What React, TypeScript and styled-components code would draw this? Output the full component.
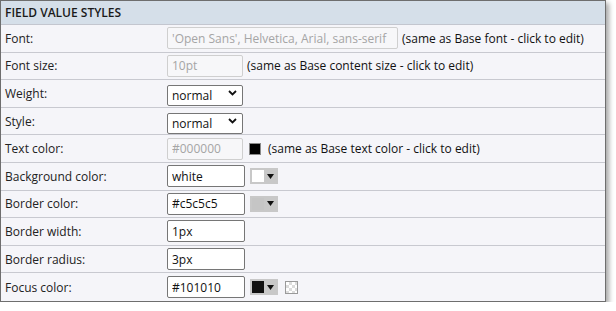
import React from 'react';
import styled, { createGlobalStyle } from 'styled-components';

const GlobalStyle = createGlobalStyle`
  body {
    margin: 0;
    background: #ffffff;
    font-family: 'Open Sans', 'Liberation Sans', sans-serif;
  }
`;

const Panel = styled.div`
  width: 606px;
  box-sizing: border-box;
  border: 1px solid #6e6e6e;
  background: #f5f5f9;
  box-shadow: 3px 3px 5px rgba(0, 0, 0, 0.35);
`;

const Header = styled.div`
  height: 23px;
  display: flex;
  align-items: center;
  padding-left: 4px;
  background: #d5dfe9;
  border-bottom: 1px solid #c3c6cf;
  font-size: 12px;
  font-weight: 600;
  color: #1a1a1a;
`;

const Row = styled.div<{ $last?: boolean }>`
  display: grid;
  grid-template-columns: 166px 1fr;
  align-items: center;
  box-sizing: border-box;
  height: 27.6px;
  border-bottom: ${(p) => (p.$last ? 'none' : '1px solid #c8c9d0')};
`;

const Label = styled.div`
  padding-left: 4px;
  font-size: 12px;
  color: #222;
`;

const Controls = styled.div`
  display: flex;
  align-items: center;
`;

const TextInput = styled.input<{ $width?: number }>`
  box-sizing: border-box;
  width: ${(p) => p.$width ?? 78}px;
  height: 22px;
  padding: 0 4px;
  border: 1px solid #767676;
  border-radius: 2px;
  background: #ffffff;
  font-family: 'Open Sans', 'Liberation Sans', sans-serif;
  font-size: 12px;
  color: #111;
  outline: none;

  &:disabled {
    border-color: #cfcfcf;
    background: #f7f7f9;
    color: #a5a5a5;
  }
`;

const SelectWrap = styled.div`
  position: relative;
  width: 76px;
  height: 21px;
`;

const Select = styled.select`
  appearance: none;
  box-sizing: border-box;
  width: 100%;
  height: 100%;
  padding: 0 4px;
  border: 1px solid #767676;
  border-radius: 2px;
  background: #ffffff;
  font-family: 'Open Sans', 'Liberation Sans', sans-serif;
  font-size: 12px;
  color: #111;
`;

const Chevron = styled.svg`
  position: absolute;
  right: 6px;
  top: 7px;
  pointer-events: none;
`;

const Hint = styled.span<{ $gap?: number }>`
  margin-left: ${(p) => p.$gap ?? 4}px;
  font-size: 12px;
  color: #111;
  white-space: nowrap;
`;

const Swatch = styled.span<{ $color: string }>`
  display: inline-block;
  box-sizing: border-box;
  width: 12px;
  height: 12px;
  margin-left: 6px;
  background: ${(p) => p.$color};
  border: 1px solid #8a8a8a;
`;

const PickerButton = styled.div`
  display: flex;
  align-items: center;
  box-sizing: border-box;
  width: 28px;
  height: 16px;
  margin-left: 5px;
  padding-left: 2px;
  background: #c8c8c8;
  gap: 3px;
`;

const PickerSwatch = styled.span<{ $color: string }>`
  display: inline-block;
  width: 12px;
  height: 12px;
  background: ${(p) => p.$color};
`;

const Transparent = styled.span`
  display: inline-block;
  box-sizing: border-box;
  width: 13px;
  height: 13px;
  margin-left: 7px;
  border: 1px solid #9a9a9a;
  background-color: #ffffff;
  background-image: linear-gradient(45deg, #dcdcdc 25%, transparent 25%, transparent 75%, #dcdcdc 75%),
    linear-gradient(45deg, #dcdcdc 25%, transparent 25%, transparent 75%, #dcdcdc 75%);
  background-size: 6px 6px;
  background-position: 0 0, 3px 3px;
`;

function Arrow() {
  return (
    <svg width="7" height="5" viewBox="0 0 7 5">
      <polygon points="0,0 7,0 3.5,5" fill="#111" />
    </svg>
  );
}

function ColorPicker({ color }: { color: string }) {
  return (
    <PickerButton>
      <PickerSwatch $color={color} />
      <Arrow />
    </PickerButton>
  );
}

function Dropdown({ value }: { value: string }) {
  return (
    <SelectWrap>
      <Select defaultValue={value}>
        <option>normal</option>
        <option>bold</option>
      </Select>
      <Chevron width="9" height="6" viewBox="0 0 9 6">
        <polyline points="1,1 4.5,4.5 8,1" fill="none" stroke="#111" strokeWidth="1.8" />
      </Chevron>
    </SelectWrap>
  );
}

export default function App() {
  return (
    <>
      <GlobalStyle />
      <Panel>
        <Header>FIELD VALUE STYLES</Header>
        <Row>
          <Label>Font:</Label>
          <Controls>
            <TextInput $width={231} disabled defaultValue="'Open Sans', Helvetica, Arial, sans-serif" />
            <Hint>(same as Base font - click to edit)</Hint>
          </Controls>
        </Row>
        <Row>
          <Label>Font size:</Label>
          <Controls>
            <TextInput $width={76} disabled defaultValue="10pt" />
            <Hint>(same as Base content size - click to edit)</Hint>
          </Controls>
        </Row>
        <Row>
          <Label>Weight:</Label>
          <Controls>
            <Dropdown value="normal" />
          </Controls>
        </Row>
        <Row>
          <Label>Style:</Label>
          <Controls>
            <Dropdown value="normal" />
          </Controls>
        </Row>
        <Row>
          <Label>Text color:</Label>
          <Controls>
            <TextInput $width={76} disabled defaultValue="#000000" />
            <Swatch $color="#000000" />
            <Hint $gap={7}>(same as Base text color - click to edit)</Hint>
          </Controls>
        </Row>
        <Row>
          <Label>Background color:</Label>
          <Controls>
            <TextInput defaultValue="white" />
            <ColorPicker color="#ffffff" />
          </Controls>
        </Row>
        <Row>
          <Label>Border color:</Label>
          <Controls>
            <TextInput defaultValue="#c5c5c5" />
            <ColorPicker color="#c5c5c5" />
          </Controls>
        </Row>
        <Row>
          <Label>Border width:</Label>
          <Controls>
            <TextInput defaultValue="1px" />
          </Controls>
        </Row>
        <Row>
          <Label>Border radius:</Label>
          <Controls>
            <TextInput defaultValue="3px" />
          </Controls>
        </Row>
        <Row $last>
          <Label>Focus color:</Label>
          <Controls>
            <TextInput defaultValue="#101010" />
            <ColorPicker color="#101010" />
            <Transparent />
          </Controls>
        </Row>
      </Panel>
    </>
  );
}
